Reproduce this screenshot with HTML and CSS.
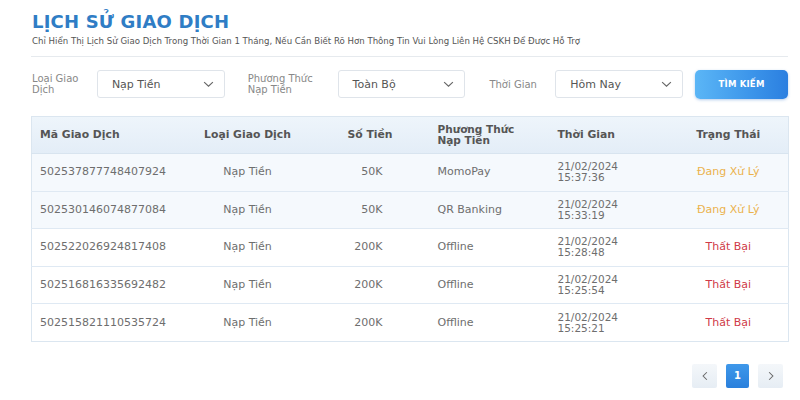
FILE: index.html
```html
<!DOCTYPE html>
<html lang="vi">
<head>
<meta charset="utf-8">
<link rel="stylesheet" href="styles.css">
</head>
<body>
<div class="page">
  <h1 class="title">LỊCH SỬ GIAO DỊCH</h1>
  <p class="subtitle">Chỉ Hiển Thị Lịch Sử Giao Dịch Trong Thời Gian 1 Tháng, Nếu Cần Biết Rõ Hơn Thông Tin Vui Lòng Liên Hệ CSKH Để Được Hỗ Trợ</p>
  <div class="divider"></div>

  <div class="filters">
    <div class="label l1">Loại Giao<br>Dịch</div>
    <div class="select"><span>Nạp Tiền</span><svg class="chev" viewBox="0 0 12 8" width="11" height="7"><path d="M1 1.2 L6 6 L11 1.2" fill="none" stroke="#666" stroke-width="1.3"/></svg></div>
    <div class="label l2">Phương Thức<br>Nạp Tiền</div>
    <div class="select"><span>Toàn Bộ</span><svg class="chev" viewBox="0 0 12 8" width="11" height="7"><path d="M1 1.2 L6 6 L11 1.2" fill="none" stroke="#666" stroke-width="1.3"/></svg></div>
    <div class="label l3">Thời Gian</div>
    <div class="select"><span>Hôm Nay</span><svg class="chev" viewBox="0 0 12 8" width="11" height="7"><path d="M1 1.2 L6 6 L11 1.2" fill="none" stroke="#666" stroke-width="1.3"/></svg></div>
    <button class="search">TÌM KIẾM</button>
  </div>

  <table class="tbl">
    <colgroup>
      <col class="c1"><col class="c2"><col class="c3"><col class="c4"><col class="c5"><col class="c6">
    </colgroup>
    <thead>
      <tr>
        <th class="left">Mã Giao Dịch</th>
        <th class="center">Loại Giao Dịch</th>
        <th class="money">Số Tiền</th>
        <th class="left2 two">Phương Thức<br>Nạp Tiền</th>
        <th class="left2">Thời Gian</th>
        <th class="center">Trạng Thái</th>
      </tr>
    </thead>
    <tbody>
      <tr class="tint">
        <td class="left">502537877748407924</td><td class="center">Nạp Tiền</td><td class="money">50K</td><td class="left2">MomoPay</td><td class="left2 dt">21/02/2024<br>15:37:36</td><td class="center pending">Đang Xử Lý</td>
      </tr>
      <tr class="tint">
        <td class="left">502530146074877084</td><td class="center">Nạp Tiền</td><td class="money">50K</td><td class="left2">QR Banking</td><td class="left2 dt">21/02/2024<br>15:33:19</td><td class="center pending">Đang Xử Lý</td>
      </tr>
      <tr>
        <td class="left">502522026924817408</td><td class="center">Nạp Tiền</td><td class="money">200K</td><td class="left2">Offline</td><td class="left2 dt">21/02/2024<br>15:28:48</td><td class="center fail">Thất Bại</td>
      </tr>
      <tr>
        <td class="left">502516816335692482</td><td class="center">Nạp Tiền</td><td class="money">200K</td><td class="left2">Offline</td><td class="left2 dt">21/02/2024<br>15:25:54</td><td class="center fail">Thất Bại</td>
      </tr>
      <tr>
        <td class="left">502515821110535724</td><td class="center">Nạp Tiền</td><td class="money">200K</td><td class="left2">Offline</td><td class="left2 dt">21/02/2024<br>15:25:21</td><td class="center fail">Thất Bại</td>
      </tr>
    </tbody>
  </table>

  <div class="pager">
    <div class="pbtn"><svg viewBox="0 0 8 12" width="6" height="10"><path d="M6.5 1 L1.5 6 L6.5 11" fill="none" stroke="#666" stroke-width="1.4"/></svg></div>
    <div class="pbtn active">1</div>
    <div class="pbtn"><svg viewBox="0 0 8 12" width="6" height="10"><path d="M1.5 1 L6.5 6 L1.5 11" fill="none" stroke="#666" stroke-width="1.4"/></svg></div>
  </div>
</div>
</body>
</html>
```

FILE: styles.css
```css
* { box-sizing: border-box; }
html, body { margin: 0; padding: 0; background: #fff; }
body { font-family: "DejaVu Sans", "Liberation Sans", sans-serif; color: #6e6e6e; width: 800px; height: 400px; overflow: hidden; }

.page { padding: 11px 12px 0 31px; }

.title {
  margin: 0 0 0 1px;
  font-size: 18px;
  line-height: 22px;
  font-weight: bold;
  color: #2f7dc5;
  letter-spacing: 0.2px;
}
.subtitle {
  margin: 2px 0 0 1px;
  font-size: 8.6px;
  line-height: 12px;
  color: #555;
  white-space: nowrap;
}
.divider {
  margin-top: 9px;
  height: 1px;
  background: #e6eaee;
  width: 757px;
}

.filters {
  display: flex;
  align-items: center;
  margin-top: 12px;
  height: 30px;
}
.label {
  font-size: 10px;
  line-height: 11px;
  color: #888;
}
.l1 { width: 65px; margin-left: 1px; }
.l2 { width: 90px; margin-left: 23px; }
.l3 { width: 66px; margin-left: 24px; }
.select {
  width: 128px;
  height: 28px;
  border: 1px solid #dfe4ea;
  border-radius: 3px;
  display: flex;
  align-items: center;
  justify-content: space-between;
  padding: 0 10px 0 14px;
  font-size: 11px;
  color: #555;
  background: #fff;
}
.chev { display: block; }
.search {
  margin-left: 12px;
  width: 93px;
  height: 29px;
  border: none;
  border-radius: 5px;
  background: linear-gradient(90deg, #5bb6f6 0%, #3c95ea 60%, #2b7fe0 100%);
  box-shadow: 0 1px 3px rgba(40, 110, 200, 0.35);
  color: #fff;
  font-family: "DejaVu Sans", "Liberation Sans", sans-serif;
  font-weight: bold;
  font-size: 8.5px;
  letter-spacing: 0.2px;
  padding: 0;
}

.tbl {
  margin-top: 17px;
  width: 757px;
  border-collapse: collapse;
  table-layout: fixed;
  border: 1px solid #dbe6f0;
  font-size: 11px;
  color: #6e6e6e;
}
.c1 { width: 169px; }
.c2 { width: 94px; }
.c3 { width: 133px; }
.c4 { width: 120px; }
.c5 { width: 121px; }
.c6 { width: 120px; }

.tbl thead tr {
  height: 37px;
  background: linear-gradient(180deg, #eef5fb 0%, #e3edf7 100%);
}
.tbl th {
  font-weight: bold;
  color: #555;
  font-size: 10.8px;
  line-height: 12px;
  padding: 0;
  border-bottom: 1px solid #d8e4ef;
}
.tbl th.two { font-size: 10.5px; line-height: 11px; }
.tbl tbody tr { height: 37.6px; border-bottom: 1px solid #dfe9f3; }
.tbl tbody tr:last-child { border-bottom: none; }
.tbl tbody tr.tint { background: #f5f9fd; }
.tbl td { padding: 0; line-height: 12px; }
.tbl td.dt { font-size: 10.5px; line-height: 11px; }

.left { text-align: left; padding-left: 8px !important; }
.left2 { text-align: left; padding-left: 10px !important; }
.center { text-align: center; }
td.money { text-align: right; padding-right: 45px !important; }
th.money { text-align: right; padding-right: 35px !important; }

.pending { color: #ebb24d; }
.fail { color: #cf3a48; }

.pager {
  display: flex;
  justify-content: flex-end;
  gap: 9px;
  margin-top: 22px;
  width: 752px;
}
.pbtn {
  width: 25px;
  height: 24px;
  border-radius: 2px;
  background: linear-gradient(180deg, #f4f7fa 0%, #e6edf4 100%);
  display: flex;
  align-items: center;
  justify-content: center;
  font-size: 10px;
  font-weight: bold;
}
.pbtn.active {
  width: 23px;
  background: linear-gradient(180deg, #3f98ea 0%, #2a80dc 100%);
  color: #fff;
}
```
